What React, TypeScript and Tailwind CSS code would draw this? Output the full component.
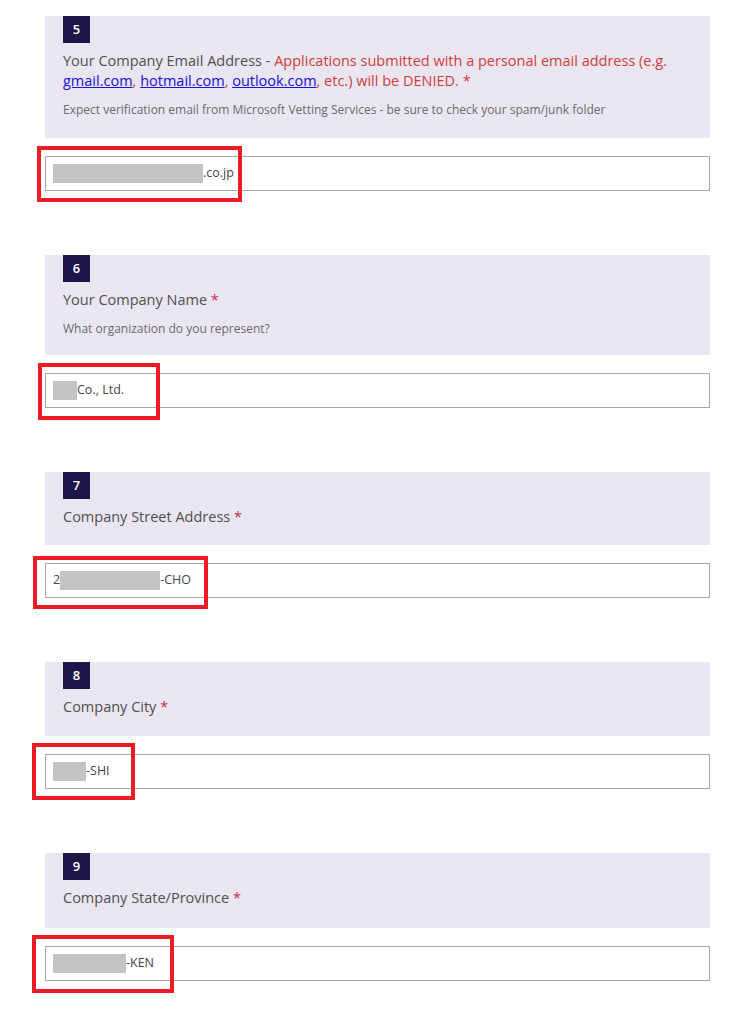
import React from "react";

type Field = {
  num: number;
  title: React.ReactNode;
  note?: string;
  value: React.ReactNode;
  pad: string;
  mark: string; // red highlight box position
};

const Blur = ({ w }: { w: string }) => <span className={`inline-block h-[19px] bg-[#c3c3c3] ${w}`} />;

const Req = () => <span className="text-[#c4314b]"> *</span>;

const fields: Field[] = [
  {
    num: 5,
    title: (
      <>
        Your Company Email Address -{" "}
        <span className="text-[#d0403a]">
          Applications submitted with a personal email address (e.g.{" "}
          <a href="#" className="text-[#1a0dde] underline">gmail.com</a>,{" "}
          <a href="#" className="text-[#1a0dde] underline">hotmail.com</a>,{" "}
          <a href="#" className="text-[#1a0dde] underline">outlook.com</a>, etc.) will be DENIED. *
        </span>
      </>
    ),
    note: "Expect verification email from Microsoft Vetting Services - be sure to check your spam/junk folder",
    value: (
      <>
        <Blur w="w-[150px]" />
        <span>.co.jp</span>
      </>
    ),
    pad: "pb-[20px]",
    mark: "-left-[8px] -top-[10px] w-[205px] h-[56px]",
  },
  {
    num: 6,
    title: (
      <>
        Your Company Name<Req />
      </>
    ),
    note: "What organization do you represent?",
    value: (
      <>
        <Blur w="w-[24px]" />
        <span>Co., Ltd.</span>
      </>
    ),
    pad: "pb-[18px]",
    mark: "-left-[7px] -top-[10px] w-[122px] h-[57px]",
  },
  {
    num: 7,
    title: (
      <>
        Company Street Address<Req />
      </>
    ),
    value: (
      <>
        <span>2</span>
        <Blur w="w-[100px]" />
        <span>-CHO</span>
      </>
    ),
    pad: "pb-[18px]",
    mark: "-left-[12px] -top-[7px] w-[175px] h-[53px]",
  },
  {
    num: 8,
    title: (
      <>
        Company City<Req />
      </>
    ),
    value: (
      <>
        <Blur w="w-[33px]" />
        <span>-SHI</span>
      </>
    ),
    pad: "pb-[19px]",
    mark: "-left-[13px] -top-[11px] w-[103px] h-[57px]",
  },
  {
    num: 9,
    title: (
      <>
        Company State/Province<Req />
      </>
    ),
    value: (
      <>
        <Blur w="w-[73px]" />
        <span>-KEN</span>
      </>
    ),
    pad: "pb-[20px]",
    mark: "-left-[13px] -top-[11px] w-[142px] h-[58px]",
  },
];

export default function App() {
  return (
    <div className="min-h-screen bg-white px-[45px] pt-[16px] font-['Open_Sans','Noto_Sans',sans-serif]">
      {fields.map((f) => (
        <section key={f.num} className="mb-[64px]">
          {/* Question header */}
          <div className={`bg-[#e9e6f1] px-[18px] ${f.pad}`}>
            <div className="w-[27px] h-[27px] bg-[#1f1548] text-white text-[13px] font-semibold flex items-center justify-center">
              {f.num}
            </div>
            <div className="mt-2 text-[14.5px] leading-[20px] text-[#505050]">{f.title}</div>
            {f.note && <div className="mt-[11px] text-[12px] leading-[16px] text-[#6b6b6b]">{f.note}</div>}
          </div>

          {/* Answer */}
          <div className="relative mt-[18px]">
            <div className="h-[35px] border border-[#a8a8a8] px-[7px] flex items-center text-[12.5px] text-[#444]">
              {f.value}
            </div>
            <div className={`absolute border-4 border-[#ed1c24] ${f.mark}`} />
          </div>
        </section>
      ))}
    </div>
  );
}
